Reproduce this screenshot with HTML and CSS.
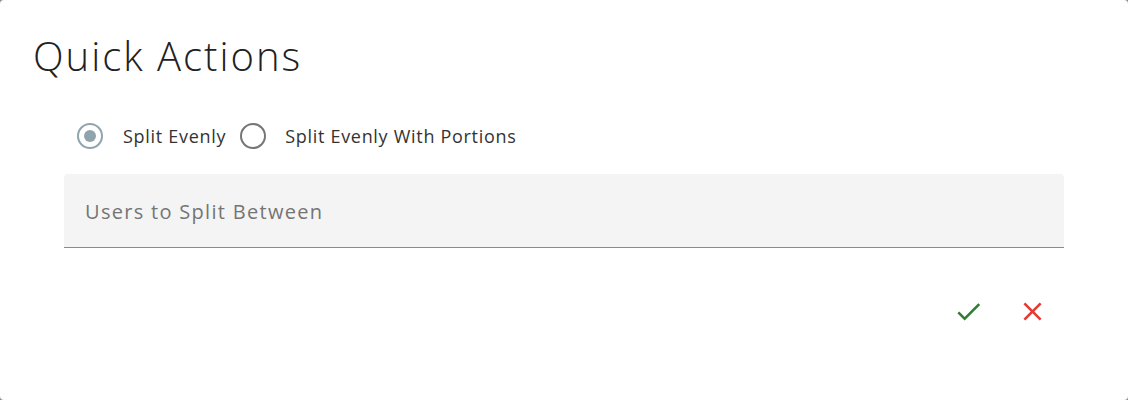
FILE: index.html
```html
<!DOCTYPE html>
<html>
<head>
<meta charset="utf-8">
<link rel="stylesheet" href="styles.css">
</head>
<body>
<div class="dialog">
  <h1 class="title">Quick Actions</h1>
  <div class="content">
    <div class="radios">
      <label class="radio checked"><span class="circle"><span class="dot"></span></span><span class="label">Split Evenly</span></label>
      <label class="radio"><span class="circle"></span><span class="label">Split Evenly With Portions</span></label>
    </div>
    <div class="field"><span class="placeholder">Users to Split Between</span></div>
  </div>
  <div class="actions">
    <button class="icon-btn ok" aria-label="Confirm">
      <svg width="31" height="31" viewBox="0 0 24 24"><path d="M9 16.17L4.83 12l-1.42 1.41L9 19 21 7l-1.41-1.41z" fill="#2e7d32"/></svg>
    </button>
    <button class="icon-btn cancel" aria-label="Cancel">
      <svg width="31" height="31" viewBox="0 0 24 24"><path d="M19 6.41L17.59 5 12 10.59 6.41 5 5 6.41 10.59 12 5 17.59 6.41 19 12 13.41 17.59 19 19 17.59 13.41 12z" fill="#e53935"/></svg>
    </button>
  </div>
</div>
</body>
</html>
```
FILE: styles.css
```css
html, body {
  margin: 0;
  padding: 0;
  background: #8c8c8c;
}
.dialog {
  box-sizing: border-box;
  height: 400px;
  background: #fff;
  border-radius: 4px;
  padding: 26px 32px 0 33px;
  font-family: "Open Sans", "Liberation Sans", sans-serif;
  color: #212121;
}
.title {
  margin: 0;
  font-weight: 300;
  font-size: 40px;
  line-height: 60px;
  color: #212121;
  letter-spacing: 2px;
}
.content {
  padding: 0 31px;
}
.radios {
  display: flex;
  align-items: center;
  margin-top: 34px;
  height: 32px;
}
.radio {
  display: flex;
  align-items: center;
  font-size: 18px;
  letter-spacing: 0.7px;
  color: #333;
}
.circle {
  box-sizing: border-box;
  width: 26px;
  height: 26px;
  border: 2px solid #757575;
  border-radius: 50%;
  display: flex;
  align-items: center;
  justify-content: center;
  margin-left: 13px;
  margin-right: 20px;
}
.radio + .radio .circle { margin-left: 14px; margin-right: 19px; }
.checked .circle {
  border-color: #90a4ae;
}
.dot {
  width: 12px;
  height: 12px;
  border-radius: 50%;
  background: #90a4ae;
}
.field {
  margin-top: 22px;
  height: 73px;
  background: #f4f4f4;
  border-radius: 4px 4px 0 0;
  border-bottom: 1px solid #8a8a8a;
  display: flex;
  align-items: center;
  padding-left: 21px;
  margin-right: 1px;
}
.placeholder {
  font-size: 20px;
  letter-spacing: 1.3px;
  color: #757575;
  padding-top: 2px;
}
.actions {
  display: flex;
  justify-content: flex-end;
  gap: 16px;
  margin-top: 39px;
  padding-right: 40px;
}
.icon-btn {
  width: 48px;
  height: 48px;
  border: 0;
  padding: 0;
  background: transparent;
  display: flex;
  align-items: center;
  justify-content: center;
}
```
